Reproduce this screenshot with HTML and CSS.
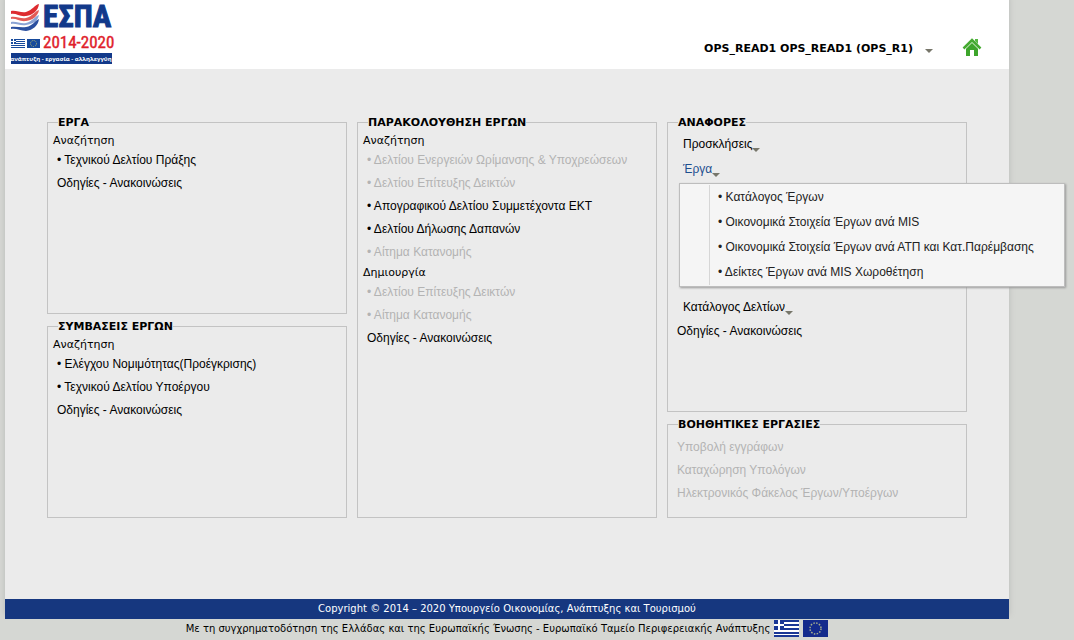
FILE: index.html
```html
<!DOCTYPE html>
<html lang="el">
<head>
<meta charset="utf-8">
<title>ΕΣΠΑ 2014-2020</title>
<link rel="stylesheet" href="styles.css">
</head>
<body>
<div class="page">
  <header class="header">
    <a class="logo" href="#" aria-label="ΕΣΠΑ 2014-2020">
      <svg width="112" height="65" viewBox="0 0 112 65">
        <path fill="#dd2c30" d="M6 11C11 10 16 13 21 12C28 10 29 5 34 4C33 11 28 15 21 16C15 17 11 13 6 14z"/>
        <path fill="#e25a56" d="M6 17C11 16 16 19 21 18C28 16 29 12 34 10C33 16 28 20 21 21C15 22 11 18 6 19z"/>
        <path fill="#8aa3d4" d="M6 22C11 21 16 24 21 23C28 21 29 17 34 15C33 21 28 24 21 25C15 26 11 23 6 24z"/>
        <path fill="#2a4f9f" d="M6 27C11 26 16 28 21 27C28 26 29 21 34 19C33 26 28 30 21 31C15 31 11 28 6 29z"/>
        <path fill="#164a9c" d="M6 39h14v1H6zM6 41h14v1H6zM6 43h14v1H6zM6 45h14v1H6zM6 47h14v1H6zM6 39h5v5H6z"/>
        <path stroke="#fff" d="M8.500 39v5M6 41.500h5"/>
        <path fill="#164a9c" d="M22 39h13v9H22z"/>
        <circle cx="28.500" cy="43.500" r="3" fill="none" stroke="#b6ba6c" stroke-dasharray="1 1"/>
        <text class="logo-name" x="38" y="27">ΕΣΠΑ</text>
        <text class="logo-years" x="38" y="48">2014-2020</text>
        <path fill="#12398a" d="M6 53h101v11H6z"/>
        <text class="logo-motto" x="56" y="61">ανάπτυξη - εργασία - αλληλεγγύη</text>
      </svg>
    </a>
    <div class="user">
      <button class="user-menu" type="button">OPS_READ1 OPS_READ1 (OPS_R1)<span class="caret"></span></button>
      <a class="home" href="#" aria-label="Αρχική">
        <svg width="20" height="20" viewBox="0 0 20 20">
          <path fill="#3da52b" d="M4 10l6-6 6 6v8h-4v-6H8v6H4z"/>
          <path fill="#55b842" d="M13 1h3v5l-3-3z"/>
          <path fill="none" stroke="#45aa31" stroke-width="2.500" d="M1.500 10.500L10 2l8.500 8.500"/>
          <path fill="none" stroke="#d3efca" stroke-width=".8" d="M3.500 11L10 4.700l6.500 6.300"/>
        </svg>
      </a>
    </div>
  </header>

  <main class="board">
    <div class="column">
      <fieldset class="panel">
        <legend>ΕΡΓΑ</legend>
        <p class="group">Αναζήτηση</p>
        <ul class="links">
          <li><a href="#">• Τεχνικού Δελτίου Πράξης</a></li>
          <li><a href="#">Οδηγίες - Ανακοινώσεις</a></li>
        </ul>
      </fieldset>
      <fieldset class="panel">
        <legend>ΣΥΜΒΑΣΕΙΣ ΕΡΓΩΝ</legend>
        <p class="group">Αναζήτηση</p>
        <ul class="links">
          <li><a href="#">• Ελέγχου Νομιμότητας(Προέγκρισης)</a></li>
          <li><a href="#">• Τεχνικού Δελτίου Υποέργου</a></li>
          <li><a href="#">Οδηγίες - Ανακοινώσεις</a></li>
        </ul>
      </fieldset>
    </div>

    <div class="column">
      <fieldset class="panel">
        <legend>ΠΑΡΑΚΟΛΟΥΘΗΣΗ ΕΡΓΩΝ</legend>
        <p class="group">Αναζήτηση</p>
        <ul class="links">
          <li><a class="off" aria-disabled="true">• Δελτίου Ενεργειών Ωρίμανσης &amp; Υποχρεώσεων</a></li>
          <li><a class="off" aria-disabled="true">• Δελτίου Επίτευξης Δεικτών</a></li>
          <li><a href="#">• Απογραφικού Δελτίου Συμμετέχοντα ΕΚΤ</a></li>
          <li><a href="#">• Δελτίου Δήλωσης Δαπανών</a></li>
          <li><a class="off" aria-disabled="true">• Αίτημα Κατανομής</a></li>
        </ul>
        <p class="group">Δημιουργία</p>
        <ul class="links">
          <li><a class="off" aria-disabled="true">• Δελτίου Επίτευξης Δεικτών</a></li>
          <li><a class="off" aria-disabled="true">• Αίτημα Κατανομής</a></li>
          <li><a href="#">Οδηγίες - Ανακοινώσεις</a></li>
        </ul>
      </fieldset>
    </div>

    <div class="column">
      <fieldset class="panel panel-tall">
        <legend>ΑΝΑΦΟΡΕΣ</legend>
        <button class="trigger" type="button">Προσκλήσεις<span class="caret"></span></button>
        <button class="trigger trigger-open" type="button" aria-expanded="true">Έργα<span class="caret"></span></button>
        <ul class="submenu">
          <li><a href="#">• Κατάλογος Έργων</a></li>
          <li><a href="#">• Οικονομικά Στοιχεία Έργων ανά MIS</a></li>
          <li><a href="#">• Οικονομικά Στοιχεία Έργων ανά ΑΤΠ και Κατ.Παρέμβασης</a></li>
          <li><a href="#">• Δείκτες Έργων ανά MIS Χωροθέτηση</a></li>
        </ul>
        <button class="trigger" type="button">Κατάλογος Δελτίων<span class="caret"></span></button>
        <ul class="links">
          <li><a href="#">Οδηγίες - Ανακοινώσεις</a></li>
        </ul>
      </fieldset>
      <fieldset class="panel panel-short">
        <legend>ΒΟΗΘΗΤΙΚΕΣ ΕΡΓΑΣΙΕΣ</legend>
        <ul class="links">
          <li><a class="off" aria-disabled="true">Υποβολή εγγράφων</a></li>
          <li><a class="off" aria-disabled="true">Καταχώρηση Υπολόγων</a></li>
          <li><a class="off" aria-disabled="true">Ηλεκτρονικός Φάκελος Έργων/Υποέργων</a></li>
        </ul>
      </fieldset>
    </div>
  </main>

  <footer class="copyright">Copyright © 2014 – 2020 Υπουργείο Οικονομίας, Ανάπτυξης και Τουρισμού</footer>
</div>
<div class="funding">
  <span>Με τη συγχρηματοδότηση της Ελλάδας και της Ευρωπαϊκής Ένωσης - Ευρωπαϊκό Ταμείο Περιφερειακής Ανάπτυξης</span>
  <svg width="25" height="17" viewBox="0 0 25 17" role="img" aria-label="Ελλάδα">
    <path fill="#fff" d="M0 0h25v17H0z"/>
    <path fill="#1a3795" d="M0 0h25v2H0zM0 4h25v2H0zM0 8h25v2H0zM0 12h25v2H0zM0 15h25v2H0zM0 0h10v10H0z"/>
    <path stroke="#fff" stroke-width="2" d="M5 0v10M0 5h10"/>
  </svg>
  <svg width="25" height="17" viewBox="0 0 25 17" role="img" aria-label="Ευρωπαϊκή Ένωση">
    <path fill="#142b8c" d="M0 0h25v17H0z"/>
    <circle cx="12.500" cy="8.500" r="5.500" fill="none" stroke="#a5ad8e" stroke-width="1.500" stroke-dasharray="1.500 1.380"/>
  </svg>
</div>
</body>
</html>
```
FILE: styles.css
```css
* {
  box-sizing: border-box;
}

body {
  margin: 0;
  background: #d5d7d3;
  color: #000;
  font: 11px/17px Verdana, "DejaVu Sans", sans-serif;
}

ul,
p {
  margin: 0;
  padding: 0;
  list-style: none;
}

a {
  color: inherit;
  text-decoration: none;
}

button {
  padding: 0;
  border: 0;
  background: none;
  color: inherit;
  font: inherit;
  cursor: pointer;
}

.page {
  margin: 0 65px 0 5px;
  background: #ebebeb;
  box-shadow: 0 -4px 6px #b9bab8;
}

.header {
  display: flex;
  justify-content: space-between;
  height: 69px;
  background: #fff;
}

.logo svg,
.home svg {
  display: block;
  overflow: visible;
}

.logo-name {
  fill: #12398a;
  stroke: #12398a;
  stroke-width: 1px;
  font: bold 31px "Liberation Sans Narrow", "Roboto Condensed", Roboto, sans-serif;
}

.logo-years {
  fill: #e0202a;
  stroke: #e0202a;
  stroke-width: 0.4px;
  font: 17px "Liberation Sans Narrow", "Roboto Condensed", Roboto, sans-serif;
}

.logo-motto {
  fill: #fff;
  font: bold 6px "Liberation Sans Narrow", "Open Sans", sans-serif;
  text-anchor: middle;
}

.user {
  display: flex;
  align-items: center;
  gap: 29px;
  padding: 27px 27px 0 0;
}

.user-menu {
  display: flex;
  align-items: center;
  font-weight: bold;
}

.caret {
  display: inline-block;
  border: 4px solid transparent;
  border-top-color: #77766a;
  border-bottom: 0;
}

.user-menu .caret {
  margin: 5px 0 0 12px;
}

.board {
  display: grid;
  grid-template-columns: repeat(3, 1fr);
  gap: 10px;
  padding: 47px 42px 81px;
}

.column {
  display: flex;
  flex-direction: column;
  gap: 6px;
  min-width: 0;
  min-height: 402px;
}

.panel {
  flex: 1;
  min-width: 0;
  margin: 0;
  padding: 0 5px;
  border: 1px solid #c3c3c3;
}

.panel-tall {
  flex: 3;
}

.panel-short {
  flex: 1;
}

legend {
  margin: 0 0 3px 5px;
  padding: 0;
  font-weight: bold;
  line-height: 13px;
}

.links {
  padding-left: 4px;
  font: 12px/23px "Liberation Sans", Arial, sans-serif;
}

.panel-short .links {
  padding-top: 2px;
}

.off {
  color: #b3b3b3;
}

.trigger {
  display: flex;
  align-items: center;
  padding-left: 10px;
  font: 12px/25px "Liberation Sans", Arial, sans-serif;
}

.trigger-open {
  color: #1d4f8f;
}

.trigger .caret {
  margin-top: 10px;
}

.submenu {
  position: relative;
  z-index: 1;
  width: max-content;
  margin: 1px 0 8px 6px;
  padding: 1px;
  border: 1px solid #bdbdbd;
  background: #f5f5f5;
  box-shadow: 1px 1px 2px #999;
  color: #222;
  font: 12px/25px "Liberation Sans", Arial, sans-serif;
}

.submenu li {
  margin-left: 28px;
  padding: 0 29px 0 8px;
  border-left: 1px solid #d6d6d6;
}

.copyright {
  background: #16377f;
  color: #fff;
  font-size: 10px;
  line-height: 20px;
  text-align: center;
}

.funding {
  position: relative;
  display: flex;
  justify-content: center;
  gap: 4px;
  margin: 0;
  padding: 1px 65px 3px 5px;
  background: #d5d7d3;
  font-size: 10px;
}
```
